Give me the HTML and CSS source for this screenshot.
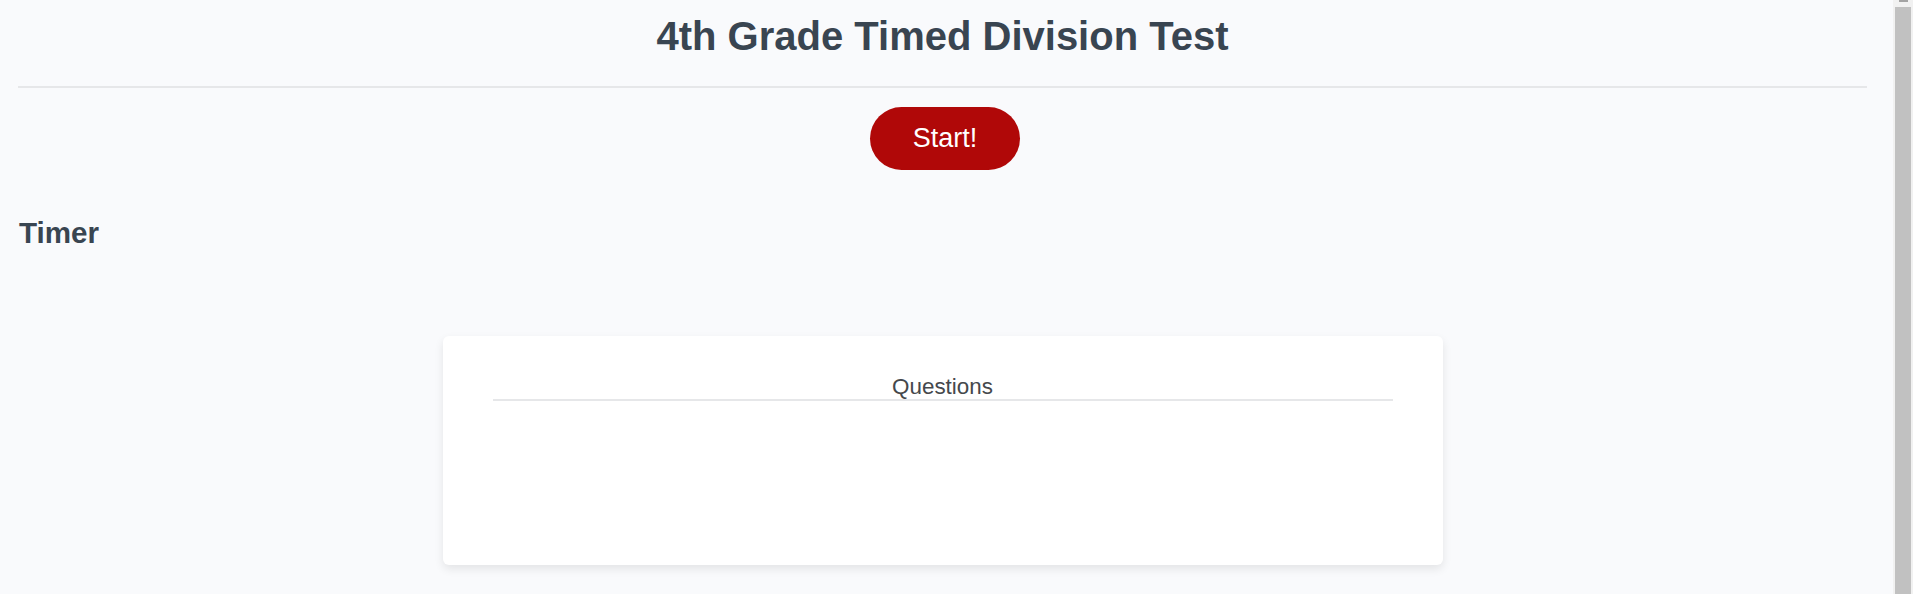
FILE: index.html
```html
<!DOCTYPE html>
<html lang="en">
<head>
<meta charset="utf-8">
<title>4th Grade Timed Division Test</title>
<link rel="stylesheet" href="styles.css">
</head>
<body>
<div class="page">
  <main class="main">
    <h1 class="title">4th Grade Timed Division Test</h1>
    <div class="rule"></div>
    <div class="start-row">
      <button class="start-btn" type="button">Start!</button>
    </div>
    <h2 class="timer">Timer</h2>
    <section class="card">
      <div class="questions-head">Questions</div>
    </section>
  </main>
  <aside class="scrollbar">
    <div class="scroll-arrow"></div>
    <div class="scroll-thumb"></div>
  </aside>
</div>
</body>
</html>
```
FILE: styles.css
```css
html, body {
  margin: 0;
  padding: 0;
  height: 100%;
  overflow: hidden;
}
body {
  background: #f9fafc;
  font-family: "Liberation Sans", Arial, sans-serif;
  color: #394551;
}
.page {
  display: flex;
  height: 100vh;
}
.main {
  flex: 1;
  padding: 0 26px 0 18px;
  min-width: 0;
}
.title {
  margin: 0;
  padding-top: 13px;
  font-size: 40px;
  line-height: 46px;
  font-weight: bold;
  text-align: center;
  color: #394551;
}
.rule {
  margin-top: 27px;
  height: 2px;
  background: #e6e7e9;
}
.start-row {
  display: flex;
  justify-content: center;
  padding-left: 5px;
  margin-top: 19px;
}
.start-btn {
  width: 150px;
  height: 63px;
  border: none;
  border-radius: 32px;
  background: #b00808;
  color: #ffffff;
  font-family: "Liberation Sans", Arial, sans-serif;
  font-size: 27px;
  padding: 0;
  cursor: pointer;
}
.timer {
  margin: 46px 0 0 1px;
  font-size: 29.6px;
  line-height: 34px;
  font-weight: bold;
  color: #394551;
}
.card {
  width: 1000px;
  height: 229px;
  box-sizing: border-box;
  margin: 86px auto 0;
  padding: 38px 50px 0;
  background: #ffffff;
  border-radius: 6px;
  box-shadow: 0 4px 10px rgba(0, 0, 0, 0.09);
}
.questions-head {
  font-size: 22.4px;
  line-height: 25px;
  text-align: center;
  color: #45484c;
  border-bottom: 2px solid #e6e7e9;
}
.scrollbar {
  width: 20px;
  flex: none;
  background: #f1f1f1;
  box-sizing: border-box;
  padding: 0 2px;
  display: flex;
  flex-direction: column;
}
.scroll-arrow {
  width: 9px;
  height: 2px;
  margin-left: 4px;
  background: #a3a3a3;
}
.scroll-thumb {
  flex: 1;
  margin-top: 5px;
  background: #c1c1c1;
}
```
